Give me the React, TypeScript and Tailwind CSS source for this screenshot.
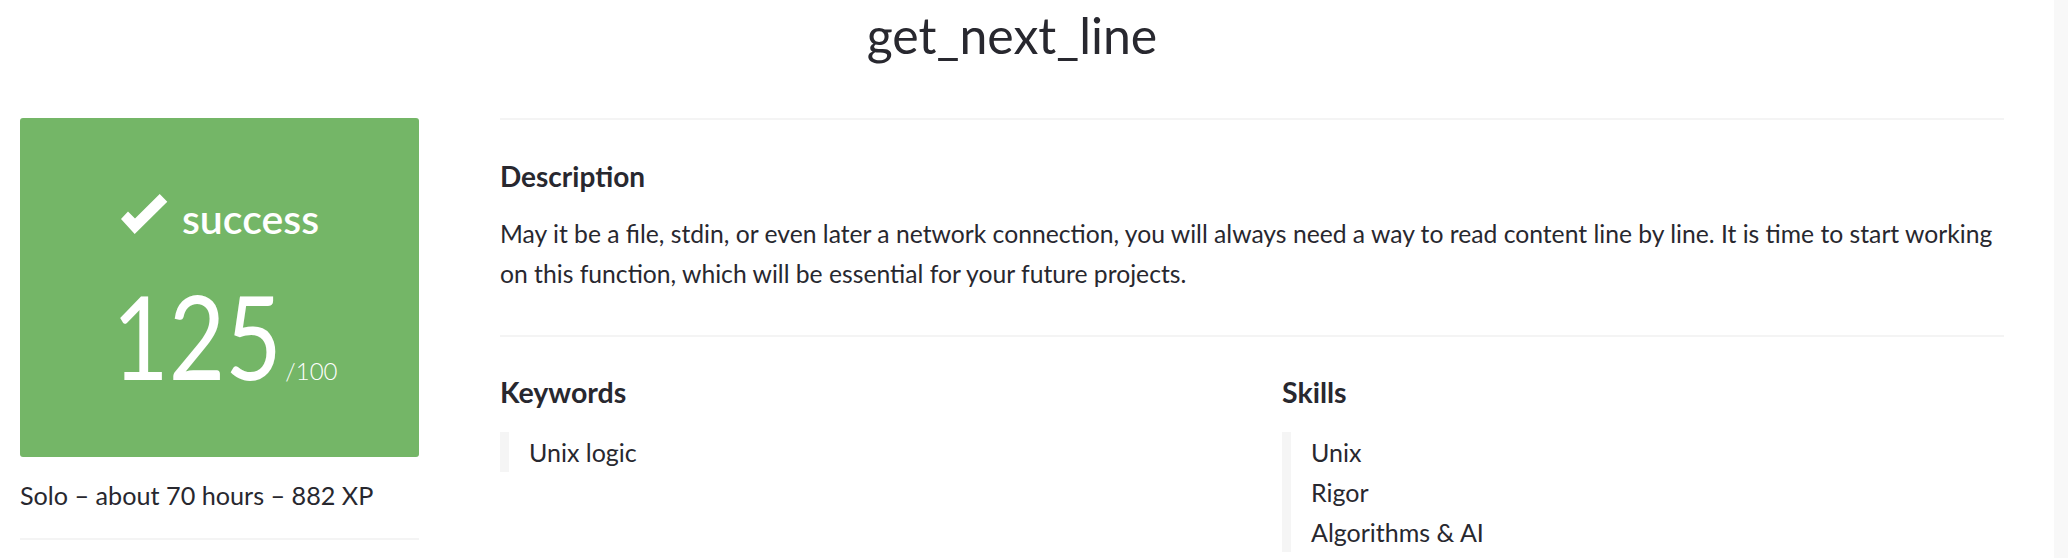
import React from "react";

function Check() {
  return (
    <svg width="48" height="42" viewBox="0 0 48 42" className="shrink-0">
      <polygon points="1,26 8,18.5 15,25.6 39.7,1 47.3,8.7 14.7,41" fill="#ffffff" />
    </svg>
  );
}

export default function App() {
  return (
    <div className="flex h-[558px] w-full overflow-hidden bg-white font-['Lato',sans-serif] text-[#28282f]">
      <div className="flex-1 pl-5 pr-[50px]">
        <header className="h-[118px] pt-[5px]">
          <h1 className="text-center text-[50px] leading-[60px] font-normal">get_next_line</h1>
        </header>
        <div className="flex gap-[81px]">
          <aside className="w-[399px] shrink-0">
            <div className="flex h-[339px] flex-col items-center justify-center rounded-[3px] bg-[#74b667] pt-[12px] text-white">
              <div className="flex items-end gap-[14px] -mt-[6px]">
                <Check />
                <span className="text-[41px] font-semibold leading-[40px] -mb-[4px]">success</span>
              </div>
              <div className="mt-[51px] flex items-baseline pl-[10px]">
                <span className="inline-block origin-right scale-x-[0.84] -ml-[31px] text-[116px] font-normal leading-[100px]">125</span>
                <span className="ml-[3px] text-[24px] font-light">/100</span>
              </div>
            </div>
            <p className="mt-[21px] text-[25.2px] leading-[34px]">Solo – about 70 hours – 882 XP</p>
            <div className="mt-[26px] h-[2px] bg-[#f4f4f4]" />
          </aside>
          <main className="flex-1 border-t-2 border-[#f4f4f4]">
            <section className="pt-[39px] pb-[41px] border-b-2 border-[#f4f4f4]">
              <h2 className="text-[28px] font-bold leading-[34px]">Description</h2>
              <p className="mt-[21px] text-[24.7px] leading-[40px]">
                May it be a file, stdin, or even later a network connection, you will always need a way to read content line by line. It is time to start working
                <br />
                on this function, which will be essential for your future projects.
              </p>
            </section>
            <section className="grid grid-cols-2 gap-x-[60px] pt-[38px]">
              <div>
                <h2 className="text-[28.5px] font-bold leading-[34px]">Keywords</h2>
                <ul className="mt-[23px] border-l-[9px] border-[#f5f5f5] pl-[20px] text-[25px] leading-[40px]">
                  <li>Unix logic</li>
                </ul>
              </div>
              <div>
                <h2 className="text-[28.5px] font-bold leading-[34px]">Skills</h2>
                <ul className="mt-[23px] border-l-[9px] border-[#f5f5f5] pl-[20px] text-[25px] leading-[40px]">
                  <li>Unix</li>
                  <li>Rigor</li>
                  <li>Algorithms &amp; AI</li>
                </ul>
              </div>
            </section>
          </main>
        </div>
      </div>
      <div className="w-[14px] shrink-0 bg-[#f8f8f8]" />
    </div>
  );
}
